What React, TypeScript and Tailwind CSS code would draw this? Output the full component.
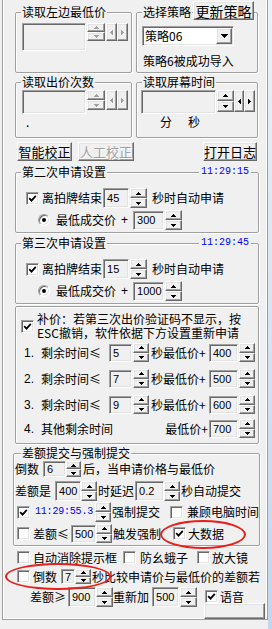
import React from "react";

const F = "font-['Noto_Sans_CJK_SC','Noto_Sans',sans-serif]";
const NUM = "font-['Liberation_Sans',Arial,sans-serif]";
const MONO = "font-['Liberation_Mono','DejaVu_Sans_Mono',monospace]";

const RAISED =
  "bg-[#f0f0f0] border border-t-white border-l-white border-r-[#696969] border-b-[#696969] shadow-[inset_-1px_-1px_0_#a0a0a0,inset_1px_1px_0_#e3e3e3]";
const SUNKEN =
  "border border-t-[#a0a0a0] border-l-[#a0a0a0] border-r-white border-b-white shadow-[inset_1px_1px_0_#696969,inset_-1px_-1px_0_#e3e3e3]";

type Dir = "u" | "d" | "l" | "r";

const paths: Record<Dir, { w: number; h: number; d: string }> = {
  u: { w: 5, h: 3, d: "M2 0h1v1h1v1h1v1H0V2h1V1h1z" },
  d: { w: 5, h: 3, d: "M0 0h5v1H4v1H3v1H2V2H1V1H0z" },
  l: { w: 3, h: 5, d: "M2 0h1v5H2V4H1V3H0V2h1V1h1z" },
  r: { w: 3, h: 5, d: "M0 0h1v1h1v1h1v1H2v1H1v1H0z" },
};

function Tri({ d, off }: { d: Dir; off?: boolean }) {
  const p = paths[d];
  return (
    <svg width={p.w} height={p.h} viewBox={`0 0 ${p.w} ${p.h}`} shapeRendering="crispEdges">
      <path d={p.d} fill={off ? "#a0a0a0" : "#000"} />
    </svg>
  );
}

function Spin({ cls, off }: { cls: string; off?: boolean }) {
  return (
    <div className={`flex flex-col shrink-0 ${cls}`}>
      <div className={`flex-1 flex items-center justify-center ${RAISED}`}>
        <Tri d="u" off={off} />
      </div>
      <div className={`flex-1 flex items-center justify-center ${RAISED}`}>
        <Tri d="d" off={off} />
      </div>
    </div>
  );
}

function HBtn({ d, cls, off }: { d: Dir; cls: string; off?: boolean }) {
  return (
    <div className={`flex items-center justify-center shrink-0 ${RAISED} ${cls}`}>
      <Tri d={d} off={off} />
    </div>
  );
}

function Edit({ cls, v }: { cls: string; v?: string }) {
  return (
    <div className={`flex items-center shrink-0 pl-[3px] text-[11px] ${NUM} bg-[#f0f0f0] ${SUNKEN} ${cls}`}>
      {v}
    </div>
  );
}

function Check({ on, cls = "" }: { on?: boolean; cls?: string }) {
  return (
    <div className={`w-[13px] h-[13px] shrink-0 bg-white flex items-center justify-center ${SUNKEN} ${cls}`}>
      {on && (
        <svg width="9" height="9" viewBox="0 0 9 9">
          <path d="M1.2 4.2 L3.5 6.6 L7.8 1.8" stroke="#000" strokeWidth="1.8" fill="none" />
        </svg>
      )}
    </div>
  );
}

function Radio({ cls = "" }: { cls?: string }) {
  return (
    <div className={`w-[12px] h-[12px] shrink-0 rounded-full bg-white flex items-center justify-center ${SUNKEN} ${cls}`}>
      <div className="w-[4px] h-[4px] rounded-full bg-black" />
    </div>
  );
}

function Btn({ cls, off, children }: { cls: string; off?: boolean; children?: React.ReactNode }) {
  return (
    <div
      className={`flex items-center justify-center whitespace-nowrap ${RAISED} ${
        off ? "text-[#a0a0a0] [text-shadow:1px_1px_0_#fff]" : "text-black"
      } ${cls}`}
    >
      {children}
    </div>
  );
}

function Group({
  title,
  cls,
  lg = "ml-[5px]",
  children,
}: {
  title?: string;
  cls: string;
  lg?: string;
  children?: React.ReactNode;
}) {
  return (
    <fieldset
      className={`relative shrink-0 border border-[#a0a0a0] rounded-[2px] shadow-[inset_1px_1px_0_#fff,1px_1px_0_#fff] ${cls}`}
    >
      {title && (
        <legend className={`${lg} px-[1px] bg-[#f0f0f0] leading-[14px] whitespace-nowrap`}>{title}</legend>
      )}
      {children}
    </fieldset>
  );
}

function Apply({ title, cls, sec, add }: { title: string; cls: string; sec: string; add: string }) {
  return (
    <Group title={title} cls={`ml-[12px] w-[244px] h-[68px] ${cls}`}>
      <div className="flex items-center h-[20px] mt-[9px] whitespace-nowrap">
        <Check on cls="ml-[10px]" />
        <span className="ml-[3px]">离拍牌结束</span>
        <Edit cls="ml-[1px] w-[26px] h-[20px]" v={sec} />
        <Spin cls="ml-[1px] w-[17px] h-[20px]" />
        <span className="ml-[5px]">秒时自动申请</span>
      </div>
      <div className="flex items-center h-[20px] mt-[2px] whitespace-nowrap">
        <Radio cls="ml-[22px]" />
        <span className="ml-[6px]">最低成交价</span>
        <span className={`ml-[5px] ${NUM}`}>+</span>
        <Edit cls="ml-[5px] w-[31px] h-[19px]" v={add} />
        <Spin cls="ml-[1px] w-[17px] h-[20px]" />
      </div>
    </Group>
  );
}

function Bu({ n, label, wide, a, b, cls }: { n: string; label: string; wide?: boolean; a?: string; b: string; cls: string }) {
  return (
    <div className={`flex items-center h-[19px] whitespace-nowrap ${cls}`}>
      <span className={`ml-[8px] w-[17px] ${NUM}`}>{n}</span>
      {wide ? (
        <>
          <span className="w-[110px]">{label}</span>
          <span className="w-[57px] text-right">最低价+</span>
        </>
      ) : (
        <>
          <span className="w-[62px]">{label}</span>
          <Edit cls="ml-[6px] w-[23px] h-[18px]" v={a} />
          <Spin cls="ml-[1px] w-[16px] h-[19px]" />
          <span className="ml-[2px] w-[57px]">秒最低价+</span>
        </>
      )}
      <Edit cls="ml-[1px] w-[29px] h-[18px]" v={b} />
      <Spin cls="ml-[1px] w-[16px] h-[19px]" />
    </div>
  );
}

export default function App() {
  return (
    <div className={`w-[272px] h-[629px] flex bg-[#f0f0f0] text-black text-[12px] leading-[14px] overflow-hidden ${F}`}>
      <div className="w-[2px] shrink-0" />
      <div className="w-[266px] shrink-0 flex flex-col">
        <div className="relative h-[620px] flex flex-col border-l border-r border-b border-[#a0a0a0] shadow-[inset_1px_0_0_#fff,inset_-1px_-1px_0_#fff]">
          {/* top pair */}
          <div className="flex items-start mt-[5px]">
            <Group title="读取左边最低价" cls="ml-[12px] w-[117px] h-[68px]">
              <div className="flex items-start mt-[4px] ml-[6px]">
                <Edit cls="w-[64px] h-[28px]" />
                <Spin cls="ml-[1px] w-[18px] h-[18px]" off />
                <HBtn d="l" off cls="ml-[1px] w-[11px] h-[18px]" />
                <HBtn d="r" off cls="w-[11px] h-[18px]" />
              </div>
            </Group>
            <Group title="选择策略" cls="ml-[4px] w-[122px] h-[68px]">
              <div className={`ml-[5px] mt-[7px] w-[92px] h-[20px] bg-white flex items-center ${SUNKEN}`}>
                <span className="pl-[2px] flex-1">策略06</span>
                <div className={`w-[16px] h-[16px] mr-[1px] flex items-center justify-center ${RAISED}`}>
                  <svg width="7" height="4" viewBox="0 0 7 4" shapeRendering="crispEdges">
                    <path d="M0 0h7v1H6v1H5v1H4v1H3V3H2V2H1V1H0z" fill="#000" />
                  </svg>
                </div>
              </div>
              <div className="ml-[6px] mt-[8px] whitespace-nowrap">策略6被成功导入</div>
            </Group>
          </div>

          {/* second pair */}
          <div className="flex items-start mt-[2px]">
            <Group title="读取出价次数" cls="ml-[12px] w-[117px] h-[63px]">
              <div className="flex items-start mt-[1px] ml-[6px]">
                <Edit cls="w-[64px] h-[24px]" />
                <Spin cls="ml-[1px] w-[18px] h-[20px]" off />
                <HBtn d="l" off cls="ml-[1px] w-[11px] h-[20px]" />
                <HBtn d="r" off cls="w-[11px] h-[20px]" />
              </div>
              <div className="ml-[10px] mt-[1px]">.</div>
            </Group>
            <Group title="读取屏幕时间" cls="ml-[4px] w-[122px] h-[63px]">
              <div className="flex items-start mt-[1px] ml-[4px]">
                <Edit cls="w-[75px] h-[24px]" />
                <Spin cls="ml-[1px] w-[17px] h-[22px]" />
                <HBtn d="l" cls="w-[10px] h-[22px]" />
                <HBtn d="r" cls="w-[11px] h-[22px]" />
              </div>
              <div className="flex mt-[1px] ml-[23px]">
                <span>分</span>
                <span className="ml-[16px]">秒</span>
              </div>
            </Group>
          </div>

          {/* buttons */}
          <div className="flex mt-[4px] text-[13px]">
            <Btn cls="ml-[14px] w-[55px] h-[19px]">智能校正</Btn>
            <Btn cls="ml-[6px] w-[56px] h-[19px]" off>
              人工校正
            </Btn>
            <Btn cls="ml-[69px] w-[54px] h-[19px]">打开日志</Btn>
          </div>

          <Apply title="第二次申请设置" cls="mt-[4px]" sec="45" add="300" />
          <Apply title="第三次申请设置" cls="mt-[3px]" sec="15" add="1000" />

          {/* 补价 */}
          <Group cls="mt-[2px] ml-[12px] w-[244px] h-[138px]">
            <div className="flex items-start mt-[5px]">
              <Check on cls="ml-[5px] mt-[8px]" />
              <div className="ml-[3px] leading-[14px] whitespace-nowrap">
                <div>补价：若第三次出价验证码不显示，按</div>
                <div>ESC撤销，软件依据下方设置重新申请</div>
              </div>
            </div>
            <Bu n="1." label="剩余时间≤" a="5" b="400" cls="mt-[3px]" />
            <Bu n="2." label="剩余时间≤" a="7" b="500" cls="mt-[7px]" />
            <Bu n="3." label="剩余时间≤" a="9" b="600" cls="mt-[7px]" />
            <Bu n="4." label="其他剩余时间" wide b="700" cls="mt-[5px]" />
          </Group>

          {/* 差额提交与强制提交 */}
          <Group title="差额提交与强制提交" lg="ml-[7px]" cls="mt-[2px] ml-[10px] w-[247px] h-[100px]">
            <div className="flex items-center h-[16px] mt-[1px] whitespace-nowrap">
              <span className="ml-[1px]">倒数</span>
              <Edit cls="ml-[4px] w-[23px] h-[16px]" v="6" />
              <Spin cls="w-[15px] h-[16px]" />
              <span className="ml-[2px]">后，当申请价格与最低价</span>
            </div>
            <div className="flex items-center h-[20px] mt-[4px] whitespace-nowrap">
              <span className="ml-[1px]">差额是</span>
              <Edit cls="ml-[4px] w-[26px] h-[20px]" v="400" />
              <Spin cls="w-[16px] h-[20px]" />
              <span className="ml-[1px]">时延迟</span>
              <Edit cls="ml-[1px] w-[29px] h-[20px]" v="0.2" />
              <Spin cls="w-[16px] h-[20px]" />
              <span className="ml-[1px]">秒自动提交</span>
            </div>
            <div className="flex items-center h-[20px] mt-[1px] whitespace-nowrap">
              <Check on cls="ml-[3px]" />
              <span className={`ml-[5px] w-[60px] text-[10px] tracking-[-0.2px] text-[#0000ff] ${MONO}`}>11:29:55.3</span>
              <Spin cls="w-[16px] h-[20px]" />
              <span className="ml-[1px]">强制提交</span>
              <Check cls="ml-[10px]" />
              <span className="ml-[4px]">兼顾电脑时间</span>
            </div>
            <div className="flex items-center h-[19px] mt-[2px] whitespace-nowrap">
              <Check cls="ml-[3px]" />
              <span className="ml-[3px] w-[37px]">差额≤</span>
              <Edit cls="ml-[1px] w-[25px] h-[18px]" v="500" />
              <Spin cls="w-[16px] h-[19px]" />
              <span className="ml-[1px]">触发强制</span>
              <Check on cls="ml-[12px]" />
              <span className="ml-[2px]">大数据</span>
            </div>
          </Group>

          <div className="flex items-center h-[17px] mt-[3px] whitespace-nowrap">
            <Check cls="ml-[14px]" />
            <span className="ml-[3px]">自动消除提示框</span>
            <Check cls="ml-[6px]" />
            <span className="ml-[4px]">防幺蛾子</span>
            <Check cls="ml-[9px]" />
            <span className="ml-[2px]">放大镜</span>
          </div>
          <div className="flex items-center h-[15px] mt-[3px] whitespace-nowrap">
            <Check cls="ml-[14px]" />
            <span className="ml-[3px]">倒数</span>
            <Edit cls="ml-[4px] w-[14px] h-[15px]" v="7" />
            <Spin cls="w-[16px] h-[15px]" />
            <span className="ml-[1px]">秒比较申请价与最低价的差额若</span>
          </div>
          <div className="flex items-start mt-[3px] whitespace-nowrap">
            <span className="ml-[27px] w-[37px] leading-[20px]">差额≥</span>
            <Edit cls="ml-[1px] w-[28px] h-[20px]" v="900" />
            <Spin cls="w-[17px] h-[20px]" />
            <span className="leading-[20px]">重新加</span>
            <Edit cls="ml-[3px] w-[27px] h-[20px]" v="500" />
            <Spin cls="ml-[1px] w-[17px] h-[20px]" />
            <div className="ml-[7px] flex flex-col">
              <div className="flex items-center h-[13px] mt-[3px]">
                <Check on cls="ml-[1px]" />
                <span className="ml-[2px]">语音</span>
              </div>
              <Btn cls="w-[61px] h-[16px]" />
            </div>
          </div>

          {/* overlays */}
          <Btn cls="absolute left-[190px] top-[1px] w-[61px] h-[19px] text-[14px]">更新策略</Btn>
          <span className={`absolute left-[196px] top-[166px] px-[2px] bg-[#f0f0f0] text-[10px] leading-[12px] text-[#0000ff] ${MONO}`}>
            11:29:15
          </span>
          <span className={`absolute left-[196px] top-[237px] px-[2px] bg-[#f0f0f0] text-[10px] leading-[12px] text-[#0000ff] ${MONO}`}>
            11:29:45
          </span>
          <div className="absolute left-[157px] top-[520px] w-[86px] h-[29px] rounded-[50%] border-2 border-[#e8201c]" />
          <div className="absolute left-[2px] top-[563px] w-[106px] h-[27px] rounded-[50%] border-2 border-[#e8201c]" />
        </div>
        <div className="flex-1" />
      </div>
      <div className="flex-1 bg-[linear-gradient(to_bottom,#eef2f6,#c2d6ec)]" />
    </div>
  );
}
